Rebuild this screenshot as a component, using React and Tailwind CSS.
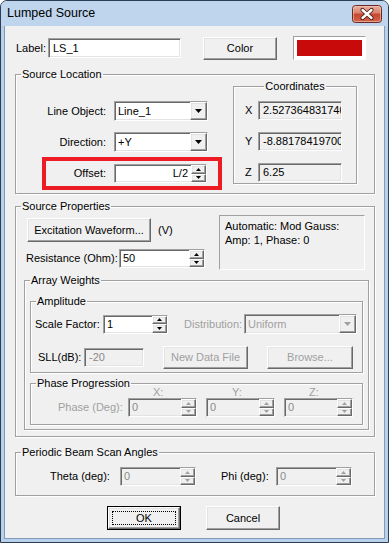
import React from "react";

const FONT = "font-['Liberation_Sans',Arial,sans-serif]";
const SUNKEN =
  "border border-t-[#a0a0a0] border-l-[#a0a0a0] border-b-white border-r-white shadow-[inset_1px_1px_0_#696969,inset_-1px_-1px_0_#e3e3e3]";
const RAISED =
  "border border-t-white border-l-white border-b-[#696969] border-r-[#696969] shadow-[inset_-1px_-1px_0_#a0a0a0,inset_1px_1px_0_#e3e3e3] bg-[#f0f0f0]";

function Tri({ up, disabled, w = 5, h = 3 }) {
  const fill = disabled ? "#a0a0a0" : "#000";
  return (
    <svg width={w} height={h} viewBox={`0 0 ${w} ${h}`}>
      {up ? (
        <polygon points={`0,${h} ${w},${h} ${w / 2},0`} fill={fill} />
      ) : (
        <polygon points={`0,0 ${w},0 ${w / 2},${h}`} fill={fill} />
      )}
    </svg>
  );
}

function Spin({ w, value, disabled, right }) {
  return (
    <div className={`flex h-[19px] ${w} ${SUNKEN} ${disabled ? "bg-[#f0f0f0]" : "bg-white"}`}>
      <div
        className={`flex-1 flex items-center px-[3px] ${right ? "justify-end" : ""} ${
          disabled ? "text-[#8a8a8a]" : "text-black"
        }`}
      >
        {value}
      </div>
      <div className="w-[15px] flex flex-col">
        <div className={`flex-1 flex items-center justify-center ${RAISED}`}>
          <Tri up disabled={disabled} />
        </div>
        <div className={`flex-1 flex items-center justify-center ${RAISED}`}>
          <Tri disabled={disabled} />
        </div>
      </div>
    </div>
  );
}

function Field({ w, h = "h-[19px]", value, disabled }) {
  return (
    <div
      className={`flex items-center px-[4px] ${w} ${h} ${SUNKEN} ${
        disabled ? "bg-[#f0f0f0] text-[#8a8a8a]" : "bg-white text-black"
      }`}
    >
      {value}
    </div>
  );
}

function Select({ w, h = "h-[20px]", value, disabled }) {
  return (
    <div className={`flex ${w} ${h} ${SUNKEN} ${disabled ? "bg-[#f0f0f0]" : "bg-white"}`}>
      <div className={`flex-1 flex items-center px-[3px] ${disabled ? "text-[#a0a0a0]" : "text-black"}`}>
        {value}
      </div>
      <div className={`w-[17px] flex items-center justify-center ${RAISED}`}>
        <Tri disabled={disabled} w={7} h={4} />
      </div>
    </div>
  );
}

function Btn({ w, h = "h-[23px]", children, disabled }) {
  return (
    <div
      className={`flex items-center justify-center ${w} ${h} ${RAISED} ${
        disabled ? "text-[#a0a0a0]" : "text-black"
      }`}
    >
      {children}
    </div>
  );
}

function Group({ legend, className = "", center, children }) {
  return (
    <fieldset className={`border border-[#a0a0a0] shadow-[inset_1px_1px_0_#fff,1px_1px_0_#fff] ${className}`}>
      <legend className={`px-[1px] leading-[13px] ${center ? "mx-auto" : "ml-[5px]"}`}>{legend}</legend>
      {children}
    </fieldset>
  );
}

// window close glyph, drawn as one small picture
function CloseButton() {
  return (
    <svg width="30" height="18" viewBox="0 0 30 18" className="mr-[6px]">
      <defs>
        <linearGradient id="cb" x1="0" y1="0" x2="0" y2="1">
          <stop offset="0" stopColor="#eab2a5" />
          <stop offset="0.45" stopColor="#d9806c" />
          <stop offset="0.5" stopColor="#c4462f" />
          <stop offset="1" stopColor="#d5674f" />
        </linearGradient>
      </defs>
      <rect x="0.5" y="0.5" width="29" height="17" rx="3" fill="url(#cb)" stroke="#6a2a21" />
      <rect x="1.5" y="1.5" width="27" height="15" rx="2" fill="none" stroke="#f4c8bd" strokeOpacity="0.6" />
      <path d="M10.5 5 L19.5 13 M19.5 5 L10.5 13" stroke="#4a1a12" strokeWidth="4.2" strokeLinecap="round" />
      <path d="M10.5 5 L19.5 13 M19.5 5 L10.5 13" stroke="#ffffff" strokeWidth="2.4" strokeLinecap="round" />
    </svg>
  );
}

export default function App() {
  return (
    <div
      className={`w-[389px] h-[543px] flex flex-col rounded-t-[7px] border border-[#2c3e55] bg-[rgb(184,208,234)] ${FONT} text-[11px] text-black overflow-hidden`}
    >
      {/* title bar */}
      <div className="h-[25px] flex items-center justify-between bg-[rgb(190,213,237)]">
        <span className="pl-[6px] text-[12.5px]">Lumped Source</span>
        <CloseButton />
      </div>

      {/* client area */}
      <div className="flex-1 mx-[3px] mb-[3px] border border-t-0 border-[#7f9abb] bg-[#f0f0f0] pl-[10px]">
        {/* label row */}
        <div className="mt-[10px] h-[24px] flex items-center">
          <span className="ml-[1px] w-[32px]">Label:</span>
          <Field w="w-[133px]" h="h-[20px]" value="LS_1" />
          <div className="ml-[22px]">
            <Btn w="w-[74px]">Color</Btn>
          </div>
          <div className="ml-[16px] w-[73px] h-[24px] border border-t-[#a0a0a0] border-l-[#a0a0a0] border-b-white border-r-white bg-white p-[3px]">
            <div className="w-full h-full bg-[#c80a0a]" />
          </div>
        </div>

        {/* Source Location */}
        <Group legend="Source Location" className="mt-[8px] w-[360px] pb-[3px]">
          <div className="flex items-start">
            <div className="w-[206px] flex flex-col">
              <div className="mt-[20px] h-[20px] flex items-center">
                <span className="w-[90px] text-right">Line Object:</span>
                <div className="ml-[8px]">
                  <Select w="w-[94px]" value="Line_1" />
                </div>
              </div>
              <div className="mt-[11px] h-[20px] flex items-center">
                <span className="w-[90px] text-right">Direction:</span>
                <div className="ml-[8px]">
                  <Select w="w-[94px]" value="+Y" />
                </div>
              </div>
              <div className="mt-[5px] ml-[26px] w-[180px] h-[33px] border-4 border-[#ed1c24] flex items-center">
                <span className="w-[60px] text-right">Offset:</span>
                <div className="ml-[8px]">
                  <Spin w="w-[93px]" value="L/2" right />
                </div>
              </div>
            </div>

            <Group legend="Coordinates" center className="ml-[11px] -mt-[1px] w-[124px] pb-[1px]">
              {[
                ["X", "2.52736483174048", "mt-[8px]"],
                ["Y", "-8.88178419700125", "mt-[12px]"],
                ["Z", "6.25", "mt-[12px]"],
              ].map(([l, v, m]) => (
                <div key={l} className={`${m} flex items-center pl-[11px]`}>
                  <span className="w-[13px]">{l}</span>
                  <div className={`w-[84px] h-[19px] px-[4px] flex items-center overflow-hidden whitespace-nowrap bg-[#f0f0f0] ${SUNKEN}`}>
                    {v}
                  </div>
                </div>
              ))}
            </Group>
          </div>
        </Group>

        {/* Source Properties */}
        <Group legend="Source Properties" className="mt-[6px] w-[360px] pb-[6px]">
          <div className="flex items-start">
            <div className="w-[203px] flex flex-col">
              <div className="mt-[5px] h-[24px] flex items-center">
                <div className="ml-[11px]">
                  <Btn w="w-[124px]" h="h-[24px]">Excitation Waveform...</Btn>
                </div>
                <span className="ml-[7px]">(V)</span>
              </div>
              <div className="mt-[7px] h-[19px] flex items-center">
                <span className="ml-[10px] w-[93px] whitespace-nowrap">Resistance (Ohm):</span>
                <Spin w="w-[86px]" value="50" />
              </div>
            </div>
            <div className="mt-[2px] w-[146px] h-[55px] border border-t-[#a0a0a0] border-l-[#a0a0a0] border-b-white border-r-white pl-[5px] pt-[3px] leading-[14px]">
              <div>Automatic: Mod Gauss:</div>
              <div>Amp: 1, Phase: 0</div>
            </div>
          </div>

          {/* Array Weights */}
          <Group legend="Array Weights" className="mt-[4px] ml-[8px] w-[345px] pb-[4px]">
            <Group legend="Amplitude" className="mt-[8px] ml-[5px] w-[333px] pb-[3px]">
              <div className="mt-[6px] h-[20px] flex items-center">
                <span className="ml-[4px] w-[68px]">Scale Factor:</span>
                <Spin w="w-[65px]" value="1" />
                <span className="ml-[16px] w-[60px] text-[#a0a0a0]">Distribution:</span>
                <Select w="w-[113px]" value="Uniform" disabled />
              </div>
              <div className="mt-[12px] h-[23px] flex items-center">
                <span className="ml-[7px] w-[46px]">SLL(dB):</span>
                <Field w="w-[60px]" h="h-[19px]" value="-20" disabled />
                <div className="ml-[19px]">
                  <Btn w="w-[85px]" disabled>New Data File</Btn>
                </div>
                <div className="ml-[19px]">
                  <Btn w="w-[86px]" disabled>Browse...</Btn>
                </div>
              </div>
            </Group>

            <Group legend="Phase Progression" className="mt-[4px] ml-[5px] w-[333px] pb-[7px]">
              <div className="-mt-[4px] h-[12px] flex items-center text-[#a0a0a0] leading-[12px]">
                <span className="ml-[122px] w-[79px]">X:</span>
                <span className="w-[77px]">Y:</span>
                <span>Z:</span>
              </div>
              <div className="h-[19px] flex items-center">
                <span className="ml-[27px] w-[70px] text-[#a0a0a0]">Phase (Deg):</span>
                <Spin w="w-[69px]" value="0" disabled />
                <div className="ml-[9px]">
                  <Spin w="w-[69px]" value="0" disabled />
                </div>
                <div className="ml-[9px]">
                  <Spin w="w-[69px]" value="0" disabled />
                </div>
              </div>
            </Group>
          </Group>
        </Group>

        {/* Periodic Beam Scan Angles */}
        <Group legend="Periodic Beam Scan Angles" className="mt-[9px] w-[360px] pb-[9px]">
          <div className="mt-[8px] h-[19px] flex items-center">
            <span className="ml-[34px] w-[70px]">Theta (deg):</span>
            <Spin w="w-[76px]" value="0" disabled />
            <span className="ml-[25px] w-[55px]">Phi (deg):</span>
            <Spin w="w-[76px]" value="0" disabled />
          </div>
        </Group>

        {/* buttons */}
        <div className="mt-[10px] flex items-center">
          <div className="ml-[92px] w-[74px] h-[24px] border border-black">
            <div className={`w-full h-full p-[3px] ${RAISED}`}>
              <div className="w-full h-full border border-dotted border-black flex items-center justify-center">
                OK
              </div>
            </div>
          </div>
          <div className="ml-[25px]">
            <Btn w="w-[74px]" h="h-[24px]">Cancel</Btn>
          </div>
        </div>
      </div>
    </div>
  );
}
